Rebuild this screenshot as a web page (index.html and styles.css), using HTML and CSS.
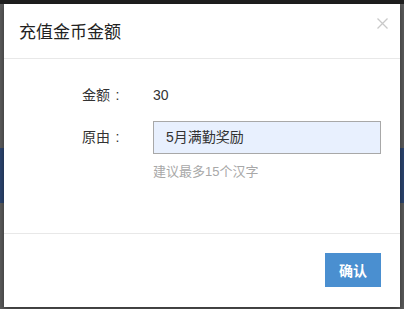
FILE: index.html
```html
<!DOCTYPE html>
<html lang="zh-CN">
<head>
<meta charset="utf-8">
<title>充值金币金额</title>
<link rel="stylesheet" href="styles.css">
</head>
<body>
<div class="page">
  <div class="topbar"></div>
  <div class="gap-a"></div>
  <div class="band"></div>
</div>
<div class="modal">
  <div class="modal-header">
    <h4 class="modal-title">充值金币金额</h4>
    <button class="close" aria-label="关闭">
      <svg width="11" height="11" viewBox="0 0 11 11"><path d="M0.5 0.5 L10.5 10.5 M10.5 0.5 L0.5 10.5" stroke="#c9c9c9" stroke-width="1.3" fill="none"/></svg>
    </button>
  </div>
  <div class="modal-body">
    <div class="row">
      <div class="label">金额<span class="colon">:</span></div>
      <div class="value">30</div>
    </div>
    <div class="row row-input">
      <div class="label">原由<span class="colon">:</span></div>
      <div class="field">
        <div class="input">5月满勤奖励</div>
        <div class="hint">建议最多15个汉字</div>
      </div>
    </div>
  </div>
  <div class="modal-footer">
    <button class="btn-primary">确认</button>
  </div>
</div>
</body>
</html>
```
FILE: styles.css
```css
html, body {
  margin: 0;
  padding: 0;
}
body {
  width: 404px;
  height: 309px;
  overflow: hidden;
  background: #5c5c5c;
  font-family: "Liberation Sans", "Noto Sans CJK SC", sans-serif;
  color: #333;
  position: relative;
}
.page {
  display: flex;
  flex-direction: column;
}
.topbar {
  height: 4px;
  background: #1e1e1e;
}
.gap-a {
  height: 144px;
}
.band {
  height: 55px;
  background: #2c4570;
}
.modal {
  position: absolute;
  left: 4px;
  top: 4px;
  width: 396px;
  height: 303px;
  background: #fff;
  box-shadow: 0 2px 6px rgba(0,0,0,0.45);
  display: flex;
  flex-direction: column;
}
.modal-header {
  position: relative;
  padding: 17px 15px 13px;
  border-bottom: 1px solid #e8e8e8;
}
.modal-title {
  margin: 0;
  font-size: 17px;
  font-weight: normal;
  line-height: 24px;
  color: #222;
}
.close {
  position: absolute;
  right: 12px;
  top: 14px;
  width: 11px;
  height: 11px;
  padding: 0;
  border: 0;
  background: none;
  display: flex;
}
.modal-body {
  padding: 26px 0 52px;
  display: flex;
  flex-direction: column;
  gap: 16px;
}
.row {
  display: grid;
  grid-template-columns: 120px 228px;
  column-gap: 29px;
  font-size: 14px;
  line-height: 20px;
}
.label {
  text-align: right;
  color: #333;
}
.colon {
  display: inline-block;
  width: 14px;
  text-align: center;
  padding-left: 1px;
  box-sizing: border-box;
}
.row-input .label {
  line-height: 33px;
}
.value {
  color: #333;
}
.input {
  box-sizing: border-box;
  height: 33px;
  border: 1px solid #a8a8a8;
  background: #e8f0fe;
  padding: 0 12px;
  line-height: 31px;
  font-size: 14px;
  color: #333;
}
.hint {
  margin-top: 9px;
  font-size: 13px;
  line-height: 18px;
  color: #a8a8a8;
}
.modal-footer {
  border-top: 1px solid #e8e8e8;
  padding: 19px 19px 20px;
  display: flex;
  justify-content: flex-end;
}
.btn-primary {
  width: 56px;
  height: 34px;
  border: 0;
  background: #4a8fd0;
  color: #fff;
  font-family: "Noto Sans CJK SC", sans-serif;
  font-size: 14px;
  font-weight: bold;
  padding: 0;
}
```
